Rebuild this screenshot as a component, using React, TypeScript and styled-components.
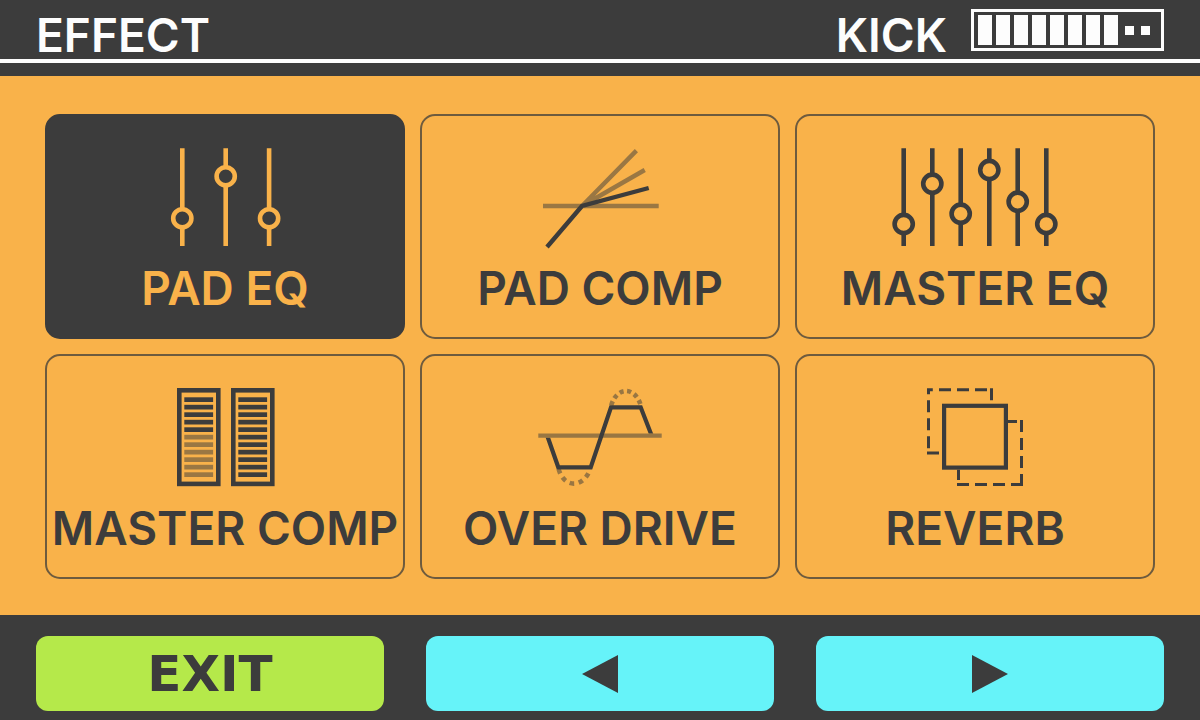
import React, { useState } from "react";
import styled, { createGlobalStyle } from "styled-components";

const ink = "#3c3c3c";
const amber = "#f9b24a";
const white = "#fdfdfd";
const lime = "#b5e94a";
const cyan = "#66f3f9";

const GlobalStyle = createGlobalStyle`
  * { box-sizing: border-box; }
  body {
    margin: 0;
    background: ${ink};
    color: ${ink};
    font-family: Inter, sans-serif;
    font-weight: 600;
  }
`;

const Screen = styled.div`
  display: flex;
  flex-direction: column;
  min-height: 100vh;
`;

const Header = styled.header`
  padding-bottom: 13px;
  background: ${ink};
  color: ${white};
`;

const TitleRow = styled.div`
  display: flex;
  align-items: flex-start;
  justify-content: space-between;
  height: 63px;
  padding: 9px 36px 0;
  border-bottom: 4px solid ${white};
`;

const Title = styled.h1`
  margin: 0;
  font-size: 46px;
  font-weight: 600;
  line-height: 52px;
`;

const PadStatus = styled.div`
  display: flex;
  gap: 24px;
  font-size: 46px;
  line-height: 52px;
`;

const Meter = styled.div`
  display: flex;
  align-items: center;
  gap: 7px;
  width: 193px;
  height: 42px;
  padding: 0 4px;
  border: 3px solid ${white};
`;

const MeterBars = styled.div`
  display: flex;
  gap: 4px;
`;

const MeterCell = styled.span<{ $lit: boolean }>`
  width: ${(p) => (p.$lit ? 14 : 9)}px;
  height: ${(p) => (p.$lit ? 30 : 9)}px;
  background: ${white};
`;

const EffectGrid = styled.main`
  flex: 1;
  display: grid;
  grid-template-columns: repeat(3, 1fr);
  grid-auto-rows: minmax(225px, 1fr);
  gap: 15px;
  padding: 38px 45px 36px;
  background: ${amber};
`;

const EffectCard = styled.button<{ $active: boolean }>`
  display: flex;
  flex-direction: column;
  align-items: center;
  justify-content: flex-start;
  gap: 15px;
  padding: 31px 0 0;
  border: 2px solid ${(p) => (p.$active ? ink : "#6e5b3e")};
  border-radius: 15px;
  background: ${(p) => (p.$active ? ink : "transparent")};
  color: ${(p) => (p.$active ? amber : ink)};
  font: inherit;
  font-size: 46px;
  line-height: 52px;
  white-space: nowrap;
  cursor: pointer;
`;

const IconFrame = styled.svg`
  width: 180px;
  height: 100px;
  overflow: visible;
  fill: none;
  stroke: currentColor;
`;

const Footer = styled.footer`
  display: grid;
  grid-template-columns: repeat(3, 1fr);
  gap: 42px;
  padding: 21px 36px 9px;
  background: ${ink};
`;

const SoftKey = styled.button<{ $color: string }>`
  display: flex;
  align-items: center;
  justify-content: center;
  height: 75px;
  padding: 0;
  border: 0;
  border-radius: 12px;
  background: ${(p) => p.$color};
  color: ${ink};
  font-family: "DejaVu Sans", sans-serif;
  font-size: 50px;
  font-weight: 700;
  line-height: 52px;
  cursor: pointer;
`;

const Arrow = styled.svg`
  width: 36px;
  height: 38px;
  fill: currentColor;
`;

function Faders({ faders }: { faders: [number, number][] }) {
  return (
    <IconFrame viewBox="0 0 180 100" strokeWidth={4.6} aria-hidden="true">
      {faders.map(([x, y]) => (
        <g key={x}>
          <path d={`M${x} 1.2V${y - 9.2}M${x} ${y + 9.2}V99`} />
          <circle cx={x} cy={y} r={9.1} />
        </g>
      ))}
    </IconFrame>
  );
}

function PadCompIcon() {
  return (
    <IconFrame viewBox="0 0 180 100" strokeWidth={4.4} aria-hidden="true">
      <path opacity={0.5} d="M33 59H148.7M72 59L126.4 3.6M72 59L134.7 23" />
      <path d="M37 100L72 59L138.7 41" />
    </IconFrame>
  );
}

function MasterCompIcon() {
  const bars = Array.from({ length: 11 }, (_, i) => 10.3 + i * 7.5);
  return (
    <IconFrame viewBox="0 0 180 100" aria-hidden="true">
      {[42, 96].map((left, column) => (
        <g key={left}>
          <rect x={left + 2.3} y={3.3} width={39} height={93.6} strokeWidth={4.6} />
          {bars.map((y, i) => (
            <rect
              key={y}
              x={left + 7.3}
              y={y}
              width={28.8}
              height={4.7}
              fill="currentColor"
              stroke="none"
              opacity={column === 0 && i > 4 ? 0.5 : 1}
            />
          ))}
        </g>
      ))}
    </IconFrame>
  );
}

function OverDriveIcon() {
  return (
    <IconFrame viewBox="0 0 180 100" strokeWidth={4.2} aria-hidden="true">
      <clipPath id="drive-ends">
        <path d="M30 50.8H80V0H150V46.6H100V100H30Z" />
      </clipPath>
      <g opacity={0.5}>
        <path d="M28.3 48.7H151.7" />
        <path
          strokeWidth={4.6}
          strokeDasharray="4.2 3.5"
          d="M101.2 18.4C107 -.8 125 -.8 130.8 18.4"
        />
        <path
          strokeWidth={4.6}
          strokeDasharray="4.6 4.6"
          d="M48.6 82C54 101.5 73 101.5 80.4 82"
        />
      </g>
      <path
        clipPath="url(#drive-ends)"
        d="M36.3 46L48.3 80.3H80.7L101 20.3H130.7L143 52"
      />
    </IconFrame>
  );
}

function ReverbIcon() {
  return (
    <IconFrame viewBox="0 0 180 100" strokeWidth={3} aria-hidden="true">
      <rect x={59.1} y={18.8} width={61.8} height={61.8} strokeWidth={4.2} />
      <path d="M106.5 1.3v12M102 2.8h-12M84 2.8h-12M66 2.8h-12M47.8 2.8H43.5V7.3M43.5 13.3v12M43.5 31.3v12M43.5 49.3v12M42 66h12" />
      <path d="M123 34.5h9M136.5 33v12M136.5 51v12M136.5 69v12M136.5 87V97.5H126M120 97.5h-12M102 97.5h-12M84 97.5h-12M73.5 82.7v10.3" />
    </IconFrame>
  );
}

const effects = [
  { name: "PAD EQ", icon: <Faders faders={[[47.3, 71.3], [90.7, 29.3], [134.1, 71.3]]} /> },
  { name: "PAD COMP", icon: <PadCompIcon /> },
  {
    name: "MASTER EQ",
    icon: (
      <Faders
        faders={[[18.7, 77], [47.3, 36.7], [75.7, 66.7], [104.3, 23], [132.7, 54.7], [161.3, 77]]}
      />
    ),
  },
  { name: "MASTER COMP", icon: <MasterCompIcon /> },
  { name: "OVER DRIVE", icon: <OverDriveIcon /> },
  { name: "REVERB", icon: <ReverbIcon /> },
];

export default function App() {
  const [selected, setSelected] = useState(0);
  const move = (step: number) =>
    setSelected((current) => (current + step + effects.length) % effects.length);

  return (
    <Screen>
      <GlobalStyle />
      <Header>
        <TitleRow>
          <Title>EFFECT</Title>
          <PadStatus>
            <span>KICK</span>
            <Meter role="img" aria-label="Level 8 of 10">
              <MeterBars>
                {Array.from({ length: 8 }, (_, i) => (
                  <MeterCell key={i} $lit />
                ))}
              </MeterBars>
              <MeterCell $lit={false} />
              <MeterCell $lit={false} />
            </Meter>
          </PadStatus>
        </TitleRow>
      </Header>
      <EffectGrid>
        {effects.map((effect, i) => (
          <EffectCard
            key={effect.name}
            type="button"
            $active={i === selected}
            aria-pressed={i === selected}
            onClick={() => setSelected(i)}
          >
            {effect.icon}
            <span>{effect.name}</span>
          </EffectCard>
        ))}
      </EffectGrid>
      <Footer>
        <SoftKey type="button" $color={lime}>EXIT</SoftKey>
        <SoftKey type="button" $color={cyan} aria-label="Previous effect" onClick={() => move(-1)}>
          <Arrow viewBox="0 0 36 38" aria-hidden="true">
            <path d="M0 19L36 0V38Z" />
          </Arrow>
        </SoftKey>
        <SoftKey type="button" $color={cyan} aria-label="Next effect" onClick={() => move(1)}>
          <Arrow viewBox="0 0 36 38" aria-hidden="true">
            <path d="M36 19L0 0V38Z" />
          </Arrow>
        </SoftKey>
      </Footer>
    </Screen>
  );
}
